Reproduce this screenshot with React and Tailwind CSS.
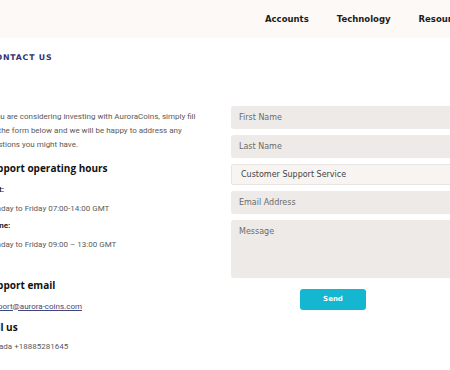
import React from 'react';

const Field = ({ label, className = 'h-[23px]' }) => (
  <div
    className={`w-full ${className} bg-[#eeeae8] rounded-[3px] px-[8px] pt-[6px] text-[8px] text-[#6b6a6a] font-['DejaVu_Sans',sans-serif]`}
  >
    {label}
  </div>
);

const App = () => {
  return (
    <div className="w-[450px] h-[370px] overflow-hidden bg-white">
      <header className="h-[38px] bg-[#fcf9f7] flex items-center">
        <nav className="ml-[265px] flex gap-[28px] text-[8.5px] font-bold text-[#1d1d1d] whitespace-nowrap font-['DejaVu_Sans',sans-serif]">
          <span>Accounts</span>
          <span>Technology</span>
          <span>Resources</span>
        </nav>
      </header>

      <div className="flex">
        <div className="w-[246px] shrink-0 -ml-[15px] pr-[12px] font-['Roboto',sans-serif] text-[8px] text-[#5a5a5a]">
          <div className="mt-[14px] ml-[4px] text-[7.8px] font-bold tracking-[0.8px] text-[#2f3270] font-['DejaVu_Sans',sans-serif]">
            CONTACT US
          </div>

          <p className="mt-[46px] leading-[14px] w-[214px]">
            If you are considering investing with AuroraCoins, simply fill out the form below and we will be happy to address any questions you might have.
          </p>

          <h3 className="mt-[9px] text-[10px] font-bold text-[#111] font-['Open_Sans',sans-serif]">
            Support operating hours
          </h3>
          <div className="mt-[8px] font-bold text-[#222]">Chat:</div>
          <div className="mt-[7px]">Monday to Friday 07:00-14:00 GMT</div>
          <div className="mt-[5px] font-bold text-[#222]">Phone:</div>
          <div className="mt-[7px]">Monday to Friday 09:00 – 13:00 GMT</div>

          <h3 className="mt-[27px] text-[10px] font-bold text-[#111] font-['Open_Sans',sans-serif]">
            Support email
          </h3>
          <a className="block mt-[8px] text-[#44477a] underline">support@aurora-coins.com</a>
          <h3 className="mt-[7px] text-[10px] font-bold text-[#111] font-['Open_Sans',sans-serif]">
            Call us
          </h3>
          <div className="mt-[6px]">Canada +18885281645</div>
        </div>

        <div className="flex-1 pt-[68px] -mr-[40px]">
          <div className="flex flex-col gap-[6px]">
            <Field label="First Name" />
            <Field label="Last Name" />
            <div className="w-full h-[21px] bg-[#f7f4f2] border border-[#e8e4e2] rounded-[2px] px-[9px] pt-[4px] text-[8px] text-[#444] font-['DejaVu_Sans',sans-serif]">
              Customer Support Service
            </div>
            <Field label="Email Address" />
            <Field label="Message" className="h-[58px]" />
          </div>
          <div className="flex mt-[11px] pl-[69px]">
            <button className="w-[66px] h-[21px] rounded-[3px] bg-[#14b7cf] text-white text-[7px] font-bold font-['DejaVu_Sans',sans-serif]">
              Send
            </button>
          </div>
        </div>
      </div>
    </div>
  );
};

export default App;
